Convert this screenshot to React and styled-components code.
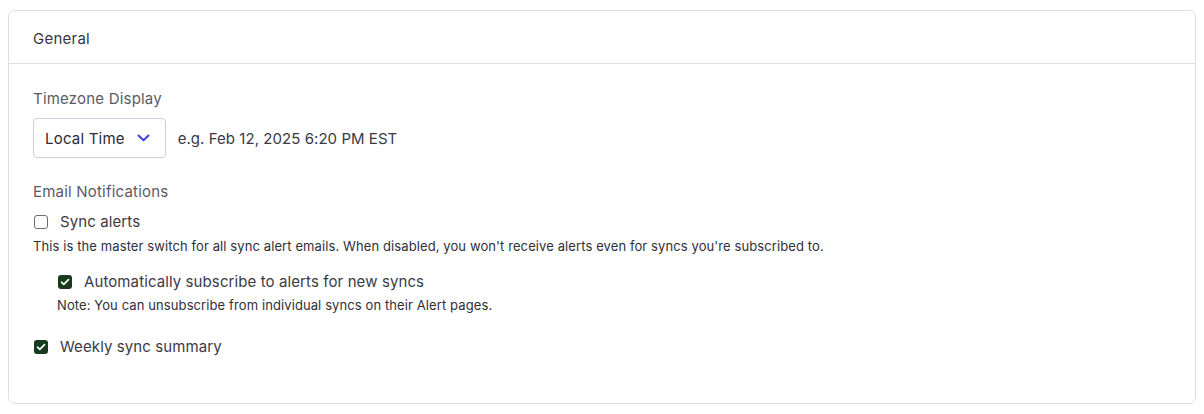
import React, { useState } from 'react';
import styled, { createGlobalStyle } from 'styled-components';

const GlobalStyle = createGlobalStyle`
  body {
    margin: 10px 8px;
    background: #ffffff;
    font-family: Inter, 'Noto Sans', sans-serif;
    color: #2b2b33;
  }
`;

// 카드 외곽
const Card = styled.section`
  border: 1px solid #dedbea;
  border-radius: 7px;
  background: #fff;
`;

const CardHeader = styled.div`
  padding: 18px 24px 14px;
  border-bottom: 1px solid #dedbea;
  font-size: 15px;
  line-height: 20px;
  letter-spacing: 0.25px;
  color: #36363f;
`;

const CardBody = styled.div`
  padding: 25px 24px 46px;
  display: flex;
  flex-direction: column;
`;

const FieldLabel = styled.div`
  font-size: 15px;
  line-height: 20px;
  letter-spacing: 0.2px;
  color: #5a5a66;
  margin-bottom: ${(p) => p.$gap || 8}px;
`;

const SelectRow = styled.div`
  display: flex;
  align-items: center;
  gap: 12px;
  margin-bottom: 24px;
`;

const SelectBox = styled.button`
  display: flex;
  align-items: center;
  gap: 12px;
  height: 40px;
  padding: 0 15px 0 11px;
  border: 1px solid #cfcce0;
  border-radius: 4px;
  background: #fff;
  font-family: inherit;
  font-size: 15px;
  letter-spacing: 0.2px;
  color: #2b2b33;
  cursor: pointer;
`;

const Example = styled.span`
  font-size: 15px;
  letter-spacing: 0.05px;
  color: #3a3a44;
`;

const CheckRow = styled.label`
  display: flex;
  align-items: center;
  gap: 12px;
  font-size: 15px;
  line-height: 20px;
  letter-spacing: 0.1px;
  color: #3a3a44;
  margin-left: ${(p) => p.$indent || 0}px;
  margin-top: ${(p) => p.$top || 0}px;
  cursor: pointer;
`;

const Box = styled.span`
  width: 14px;
  height: 14px;
  box-sizing: border-box;
  border-radius: 3px;
  border: ${(p) => (p.$checked ? 'none' : '1.5px solid #6b6b72')};
  background: ${(p) => (p.$checked ? '#173b1c' : '#fff')};
  display: flex;
  align-items: center;
  justify-content: center;
  flex-shrink: 0;
  margin-left: 1px;
`;

const Hint = styled.div`
  font-size: 13px;
  line-height: 16px;
  letter-spacing: 0.1px;
  color: #2f2f37;
  margin-left: ${(p) => p.$indent || 0}px;
  margin-top: ${(p) => p.$top || 6}px;
`;

const Chevron = () => (
  <svg width="13" height="8" viewBox="0 0 13 8" fill="none">
    <path d="M1.5 1.5L6.5 6.2L11.5 1.5" stroke="#3e3ee0" strokeWidth="2" strokeLinecap="round" strokeLinejoin="round" />
  </svg>
);

const Checkbox = ({ checked, onChange }) => (
  <Box $checked={checked} onClick={onChange}>
    {checked && (
      <svg width="10" height="8" viewBox="0 0 10 8" fill="none">
        <path d="M1.5 4.2L3.8 6.3L8.5 1.6" stroke="#fff" strokeWidth="1.7" strokeLinecap="round" strokeLinejoin="round" />
      </svg>
    )}
  </Box>
);

const App = () => {
  const [syncAlerts, setSyncAlerts] = useState(false);
  const [autoSub, setAutoSub] = useState(true);
  const [weekly, setWeekly] = useState(true);

  return (
    <>
      <GlobalStyle />
      <Card>
        <CardHeader>General</CardHeader>
        <CardBody>
          <FieldLabel $gap={9}>Timezone Display</FieldLabel>
          <SelectRow>
            <SelectBox>
              Local Time
              <Chevron />
            </SelectBox>
            <Example>e.g. Feb 12, 2025 6:20 PM EST</Example>
          </SelectRow>

          <FieldLabel $gap={10}>Email Notifications</FieldLabel>
          <CheckRow>
            <Checkbox checked={syncAlerts} onChange={() => setSyncAlerts(!syncAlerts)} />
            Sync alerts
          </CheckRow>
          <Hint>
            This is the master switch for all sync alert emails. When disabled, you won't receive alerts even for syncs you're subscribed to.
          </Hint>

          <CheckRow $indent={24} $top={18}>
            <Checkbox checked={autoSub} onChange={() => setAutoSub(!autoSub)} />
            Automatically subscribe to alerts for new syncs
          </CheckRow>
          <Hint $indent={24} $top={5}>
            Note: You can unsubscribe from individual syncs on their Alert pages.
          </Hint>

          <CheckRow $top={24}>
            <Checkbox checked={weekly} onChange={() => setWeekly(!weekly)} />
            Weekly sync summary
          </CheckRow>
        </CardBody>
      </Card>
    </>
  );
};

export default App;
